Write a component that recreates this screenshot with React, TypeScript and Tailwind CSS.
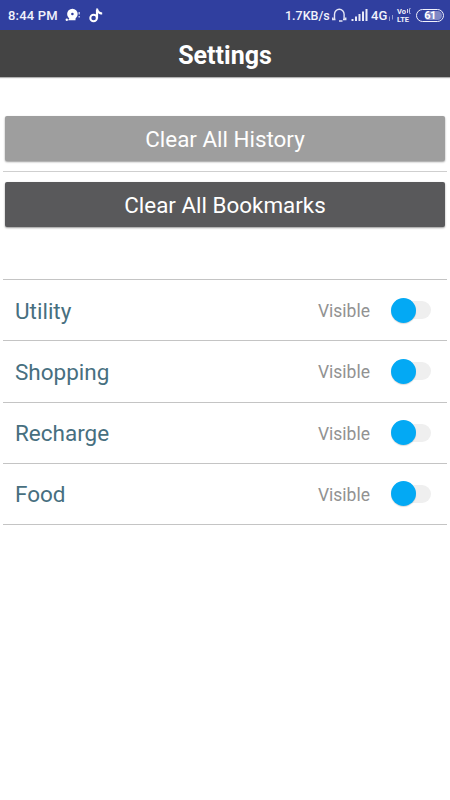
import clsx from 'clsx';

interface CategoryRowProps {
  name: string;
}

const categories = ['Utility', 'Shopping', 'Recharge', 'Food'];

const StatusBar = () => (
  <div className="flex h-[30px] items-center bg-[#303f9f] pl-2 pr-[6px] font-medium text-[#f1f2fb]">
    <span className="w-[57px] whitespace-nowrap pt-px text-[13px] leading-[29px] tracking-[0.2px]">8:44 PM</span>

    {/* Notification icons */}
    <svg className="h-[14px] w-[16px]" viewBox="0 0 16 14">
      <circle cx="7.4" cy="6" r="5.3" fill="#fff" />
      <circle cx="7.4" cy="6" r="1.3" fill="#303f9f" />
      <path d="M4.5 10 3 12.300h7.500V10z" fill="#fff" />
      <circle cx="1.8" cy="11.8" r="1.2" fill="#fff" />
      <path d="M14.200 4v2.500M14.200 8v1.500" stroke="#c3c8ea" strokeWidth="1.400" />
    </svg>
    <svg className="ml-[8px] h-[15px] w-[14px]" viewBox="0 0 14 15">
      <circle cx="4.600" cy="10" r="3.300" fill="none" stroke="#fff" strokeWidth="2" />
      <path d="M8 10.500V1.500" fill="none" stroke="#fff" strokeWidth="2.200" />
      <path d="M7 .5h2c.2 2.200 1.800 3.700 4.200 3.900v2.200C11.500 6.500 10 6 9 5z" fill="#fff" />
    </svg>

    <span className="ml-auto w-[47px] whitespace-nowrap pt-px text-[12.5px] leading-[29px]">1.7KB/s</span>
    <svg className="h-[14px] w-[15px]" viewBox="0 0 15 14">
      <path d="M2.500 11V6.200a4.800 5 0 0 1 9.600 0V11" fill="none" stroke="#e4e6f6" strokeWidth="1.400" />
      <path d="M.8 9.500v2h2.700M13.700 9.500v2H11M7 13h3.500" fill="none" stroke="#e4e6f6" strokeWidth="1.500" />
    </svg>
    <svg className="ml-[4px] h-[12px] w-[17px]" viewBox="0 0 17 12">
      <path d="M1.500 10v2M5 7.500V12M8.500 5v7M12 2.500V12M15.500 0v12" stroke="#e9ebf8" strokeWidth="2" />
    </svg>
    <span className="ml-[3px] w-[17px] pt-px text-[13px] leading-[29px]">4G</span>
    <svg className="mt-[5px] h-[6px] w-[6px]" viewBox="0 0 6 6">
      <path d="M1.500 6V1.500M4.500 0v4.500" stroke="#8f98d0" strokeWidth="1" />
    </svg>
    <span className="ml-[3px] flex w-[15px] flex-col text-[7.5px] font-bold leading-[7px]">
      <span className="flex h-[7px] items-center gap-px whitespace-nowrap">
        Vo
        <svg className="h-[6px] w-[4px]" viewBox="0 0 4 6">
          <path d="M.5 1v4M3.200 0C2 2 2 4 3.200 6" fill="none" stroke="#d5d8ef" strokeWidth="1" />
        </svg>
      </span>
      <span className="mt-px h-[7px] whitespace-nowrap">LTE</span>
    </span>
    <span className="ml-[4px] h-[13px] w-[28px] rounded-full border border-[#f1f2fb] p-px">
      <span className="block h-[9px] rounded-full bg-linear-to-r from-[#303f9f] from-30% to-[#8088c5] to-40% text-center text-[11px] font-bold leading-[9px] tracking-[-0.5px] text-white">
        61
      </span>
    </span>
  </div>
);

const ClearButton = ({ label, className }: { label: string; className: string }) => (
  <button
    className={clsx(
      'mx-[5px] block h-[45px] w-[440px] rounded-[2px] text-center text-[22.4px] leading-[47px] text-white shadow-[0_1px_2px_rgba(0,0,0,0.4)]',
      className
    )}
  >
    {label}
  </button>
);

const CategoryRow = ({ name }: CategoryRowProps) => (
  <div className="mx-[3px] flex h-[61.25px] items-center border-b border-[#c4c4c4] pl-3 pr-4">
    <span className="pt-px text-[22.5px] leading-[30px] text-[#476f80]">{name}</span>
    <span className="ml-auto pt-[2px] text-[17.5px] leading-[26px] text-[#929292]">Visible</span>
    <div className="ml-[21px] flex h-[26px] w-10 items-center">
      <div className="h-[25px] w-[25px] shrink-0 rounded-full bg-[#03a9f4] shadow-[0_1px_1px_rgba(0,0,0,0.15)]" />
      <div className="-ml-[13px] -z-10 h-[18px] w-[28px] rounded-r-full bg-[#efefef]" />
    </div>
  </div>
);

const App = () => {
  return (
    <div className="relative isolate h-[800px] w-[450px] overflow-hidden bg-white font-['Roboto',sans-serif]">
      <StatusBar />
      <header className="h-[47px] bg-[#444444] text-center text-[25px] font-bold leading-[51px] text-white shadow-[0_1px_1px_rgba(0,0,0,0.3)]">
        Settings
      </header>

      {/* Clear actions */}
      <section className="pt-[39px]">
        <ClearButton label="Clear All History" className="bg-[#9e9e9e]" />
        <div className="mx-[3px] mt-[10px] h-px bg-[#cfcfcf]" />
        <ClearButton label="Clear All Bookmarks" className="mt-[10px] bg-[#59595b]" />
      </section>

      {/* Category visibility */}
      <section className="mt-[52px]">
        <div className="mx-[3px] h-px bg-[#c4c4c4]" />
        {categories.map((name) => (
          <CategoryRow key={name} name={name} />
        ))}
      </section>
    </div>
  );
};

export default App;
